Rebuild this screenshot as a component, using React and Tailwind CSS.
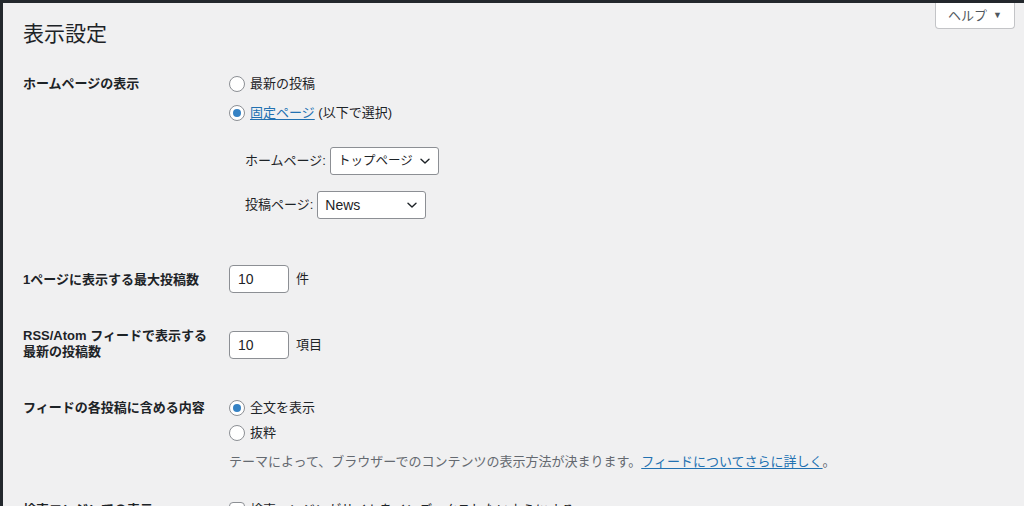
import React from "react";

const FONT = { fontFamily: '"Liberation Sans", "Noto Sans CJK JP", sans-serif' };

function Radio({ checked }) {
  return (
    <span className="flex h-[16px] w-[16px] shrink-0 items-center justify-center rounded-full border border-[#8c8f94] bg-white">
      {checked && <span className="h-[8px] w-[8px] rounded-full bg-[#3582c4]" />}
    </span>
  );
}

function Chevron() {
  return (
    <svg width="12" height="12" viewBox="0 0 12 12" fill="none" className="shrink-0">
      <path d="M2 4.2 L6 8 L10 4.2" stroke="#1d2327" strokeWidth="1.4" strokeLinecap="round" strokeLinejoin="round" />
    </svg>
  );
}

function Select({ value, textClass }) {
  return (
    <div className="flex h-[28px] w-[109px] items-center justify-between whitespace-nowrap rounded-[3px] border border-[#8c8f94] bg-white pl-[7px] pr-[7px] text-[#1d2327]">
      <span className={textClass}>{value}</span>
      <Chevron />
    </div>
  );
}

function NumInput({ value }) {
  return (
    <div className="flex h-[28px] w-[60px] items-center rounded-[4px] border border-[#8c8f94] bg-white pl-[8px] text-[14px] text-[#1d2327]">
      {value}
    </div>
  );
}

export default function App() {
  return (
    <div
      style={FONT}
      className="h-[506px] w-full overflow-hidden border-l-[3px] border-t-[3px] border-[#23282d] bg-[#f0f0f1] text-[13px] text-[#1d2327]"
    >
      <div className="pl-[20px]">
        {/* header */}
        <div className="flex items-start justify-between">
          <h1 className="pt-[17px] text-[21px] font-normal leading-[28px] text-[#1d2327]">表示設定</h1>
          <div className="mr-[9px] flex h-[26px] w-[80px] items-center justify-center gap-[6px] rounded-b-[4px] border border-t-0 border-[#c3c4c7] bg-white text-[13px] text-[#50575e]">
            <span>ヘルプ</span>
            <span className="text-[9px]">▼</span>
          </div>
        </div>

        {/* section 1 */}
        <div className="mt-[26px] flex">
          <div className="w-[206px] shrink-0 font-bold leading-[20px]">ホームページの表示</div>
          <div>
            <div className="flex h-[20px] items-center gap-[5px]">
              <Radio />
              <span>最新の投稿</span>
            </div>
            <div className="mt-[9px] flex h-[20px] items-center gap-[5px]">
              <Radio checked />
              <span>
                <span className="text-[#2271b1] underline underline-offset-2">固定ページ</span> (以下で選択)
              </span>
            </div>
            <div className="mt-[24px] flex items-center gap-[4px] pl-[16px]">
              <span>ホームページ:</span>
              <Select value="トップページ" textClass="text-[12.5px]" />
            </div>
            <div className="mt-[16px] flex items-center gap-[4px] pl-[16px]">
              <span>投稿ページ:</span>
              <Select value="News" textClass="text-[14px]" />
            </div>
          </div>
        </div>

        {/* section 2 */}
        <div className="mt-[46px] flex">
          <div className="w-[206px] shrink-0 pt-[5px] font-bold leading-[20px]">1ページに表示する最大投稿数</div>
          <div className="flex items-center gap-[7px]">
            <NumInput value="10" />
            <span>件</span>
          </div>
        </div>

        {/* section 3 */}
        <div className="mt-[35px] flex">
          <div className="w-[206px] shrink-0 font-bold leading-[16px]">
            RSS/Atom フィードで表示する
            <br />
            最新の投稿数
          </div>
          <div className="flex items-center gap-[7px] pt-[2px]">
            <NumInput value="10" />
            <span>項目</span>
          </div>
        </div>

        {/* section 4 */}
        <div className="mt-[38px] flex">
          <div className="w-[206px] shrink-0 font-bold leading-[20px]">フィードの各投稿に含める内容</div>
          <div>
            <div className="flex h-[20px] items-center gap-[5px]">
              <Radio checked />
              <span>全文を表示</span>
            </div>
            <div className="mt-[5px] flex h-[20px] items-center gap-[5px]">
              <Radio />
              <span>抜粋</span>
            </div>
            <div className="mt-[9px] leading-[20px] text-[#646970]">
              テーマによって、ブラウザーでのコンテンツの表示方法が決まります。
              <span className="text-[#2271b1] underline underline-offset-2">フィードについてさらに詳しく</span>。
            </div>
          </div>
        </div>

        {/* section 5 */}
        <div className="mt-[28px] flex">
          <div className="w-[206px] shrink-0 font-bold leading-[20px]">検索エンジンでの表示</div>
          <div className="flex h-[20px] items-center gap-[5px]">
            <span className="h-[16px] w-[16px] shrink-0 rounded-[4px] border border-[#8c8f94] bg-white" />
            <span>検索エンジンがサイトをインデックスしないようにする</span>
          </div>
        </div>
      </div>
    </div>
  );
}
